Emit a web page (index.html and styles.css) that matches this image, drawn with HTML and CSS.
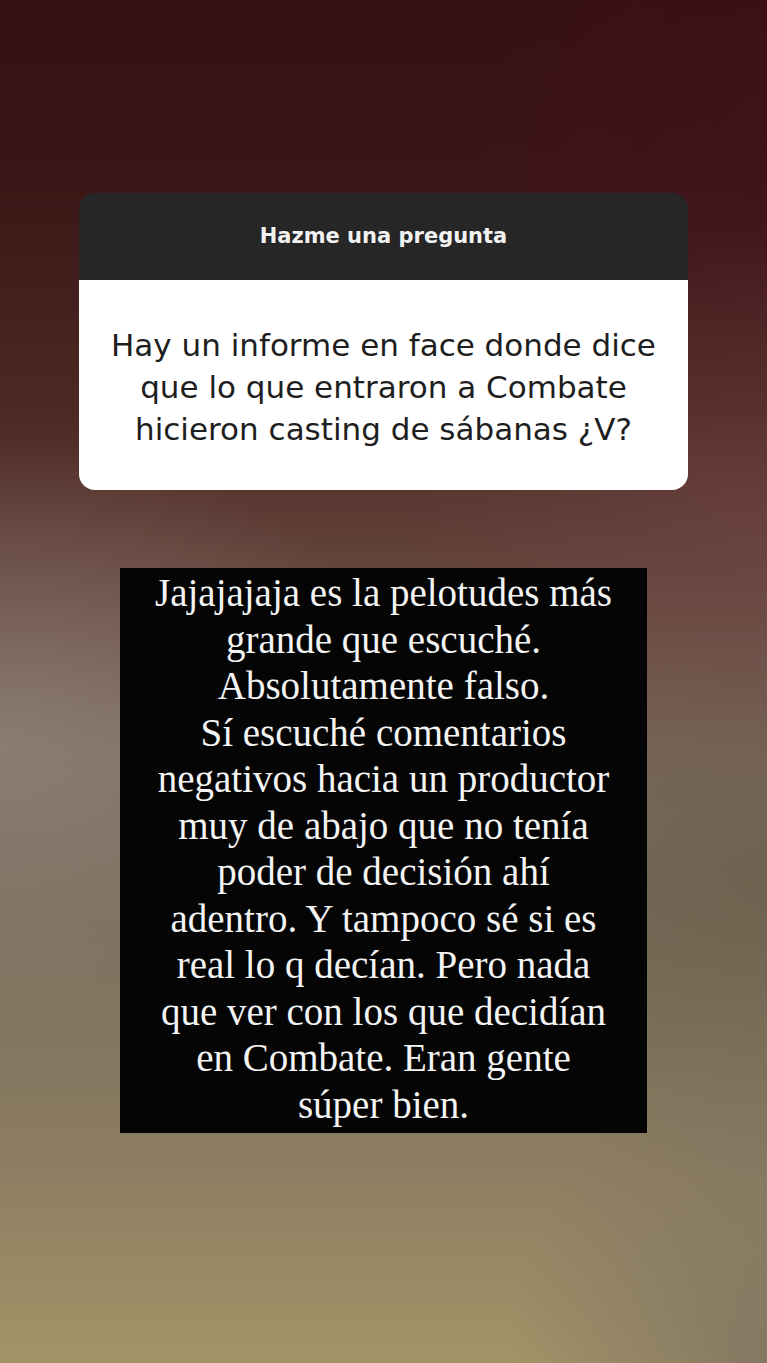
FILE: index.html
```html
<!DOCTYPE html>
<html lang="es">
<head>
  <meta charset="UTF-8">
  <title>Hazme una pregunta</title>
  <link rel="stylesheet" href="styles.css">
</head>
<body>
  <div class="story">

    <!-- Question sticker -->
    <div class="question-card">
      <div class="question-title">Hazme una pregunta</div>
      <div class="question-text">Hay un informe en face donde dice<br>que lo que entraron a Combate<br>hicieron casting de sábanas ¿V?</div>
    </div>

    <!-- Answer text on black box -->
    <div class="answer">Jajajajaja es la pelotudes más<br>grande que escuché.<br>Absolutamente falso.<br>Sí escuché comentarios<br>negativos hacia un productor<br>muy de abajo que no tenía<br>poder de decisión ahí<br>adentro. Y tampoco sé si es<br>real lo q decían. Pero nada<br>que ver con los que decidían<br>en Combate. Eran gente<br>súper bien.</div>

  </div>
</body>
</html>
```

FILE: styles.css
```css
/* Full screen story background */
body, html {
  margin: 0;
  padding: 0;
  height: 100%;
}

.story {
  width: 767px;
  height: 1363px;
  box-sizing: border-box;
  padding-top: 193px;
  display: flex;
  flex-direction: column;
  align-items: center;
  background:
    radial-gradient(ellipse 420px 300px at 0px 740px, rgba(150, 140, 130, 0.55), rgba(150, 140, 130, 0) 100%),
    radial-gradient(ellipse 360px 300px at 767px 520px, rgba(115, 70, 70, 0.5), rgba(115, 70, 70, 0) 100%),
    radial-gradient(ellipse 300px 360px at 767px 120px, rgba(70, 15, 30, 0.5), rgba(70, 15, 30, 0) 100%),
    radial-gradient(ellipse 420px 300px at 767px 880px, rgba(100, 92, 70, 0.6), rgba(100, 92, 70, 0) 100%),
    radial-gradient(ellipse 260px 300px at 767px 1363px, rgba(120, 108, 96, 0.7), rgba(120, 108, 96, 0) 100%),
    linear-gradient(to bottom, #361111 0%, #3b1515 12%, #4e2824 30%, #6a4c42 45%, #7c6a5e 55%, #7a6e5c 68%, #8c7d62 85%, #a39468 100%);
}

/* Question sticker */
.question-card {
  width: 609px;
  border-radius: 16px;
  overflow: hidden;
  font-family: "DejaVu Sans", "Liberation Sans", sans-serif;
  text-align: center;
}

.question-title {
  height: 87px;
  line-height: 87px;
  background-color: #262626;
  color: #f2f2f2;
  font-size: 21px;
  font-weight: bold;
}

.question-text {
  height: 210px;
  box-sizing: border-box;
  padding-top: 44px;
  background-color: #ffffff;
  color: #1e1e1e;
  font-size: 31px;
  line-height: 42px;
}

/* Answer box */
.answer {
  margin-top: 78px;
  width: 527px;
  height: 565px;
  box-sizing: border-box;
  padding-top: 2px;
  background-color: #050505;
  color: #f4f4f4;
  font-family: "Liberation Serif", "Times New Roman", serif;
  font-size: 39px;
  line-height: 46.5px;
  text-align: center;
}
```
